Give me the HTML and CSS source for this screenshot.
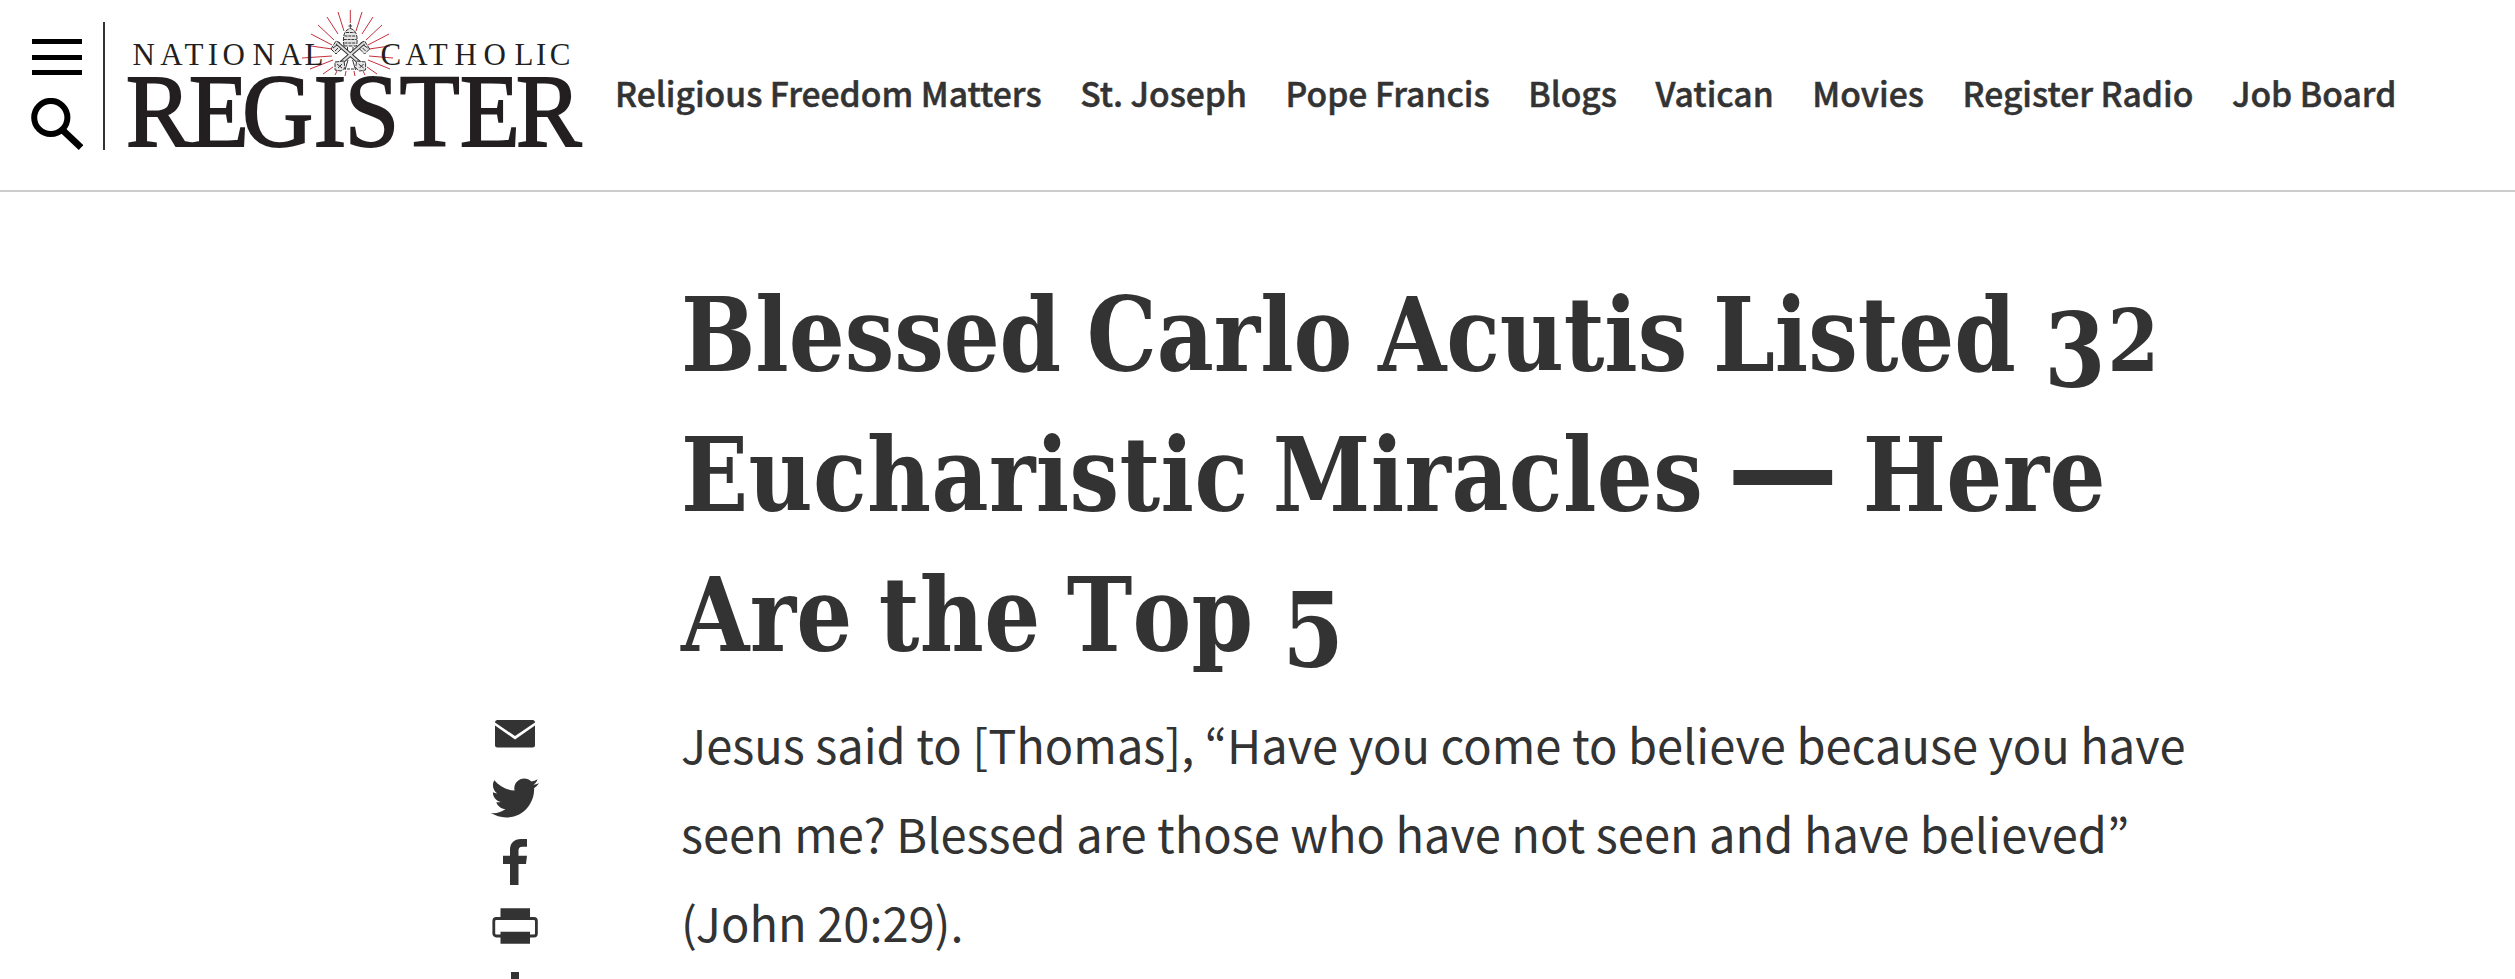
FILE: index.html
```
<!DOCTYPE html>
<html lang="en">
<head>
    <meta charset="UTF-8">
    <meta name="viewport" content="width=device-width, initial-scale=1.0">
    <title>Blessed Carlo Acutis Listed 32 Eucharistic Miracles | National Catholic Register</title>
    <link rel="stylesheet" href="styles.css">
</head>
<body>

    <header class="site-header">
        <div class="tools">
            <a href="#" class="menu-btn" aria-label="Menu"><span></span><span></span><span></span></a>
            <a href="#" class="search-btn" aria-label="Search">
                <svg width="52" height="52" viewBox="0 0 52 52">
                    <circle cx="19.8" cy="19.5" r="16.6" fill="none" stroke="#000" stroke-width="6"/>
                    <path d="M31.500 32 L50 49.500" stroke="#000" stroke-width="6.600"/>
                </svg>
            </a>
        </div>

        <a href="#" class="logo">
            <svg width="460" height="150" viewBox="125 0 460 150">
                <g class="rays">
                    <path d="M350.300 10v13M338 12l6 19M327 17l11 17M318 25l16 15M311 34l21 11M311 46l21 3M302 58l30-2M310 69l23-9M323 74l10-7M335 75l3-6M345 76l1-5"/>
                    <path d="M362 12l-6 19M373 17l-11 17M382 25l-16 15M389 34l-21 11M390 46l-21 3M393 58l-24-2M390 69l-22-9M377 74l-10-7M365 75l-3-6M355 76l-1-5"/>
                </g>
                <!-- tiara and crossed keys -->
                <g class="crest">
                    <path d="M350.300 24v5M348.500 26h3.600" />
                    <path class="crest-fill" d="M344 46c-1.500-8-.5-16 6.300-17.500C357 30 358 38 356.600 46z"/>
                    <path d="M346 32.500h8.600M344.500 36h11.600M343.800 39.500h13M344.500 43h11.600" stroke-dasharray="3 .8"/>
                    <path d="M347.500 47v6M353 47v6"/>
                    <path class="crest-fill" d="M331 49l5-8 4 2 1 6-5 5zM369.600 49l-5-8-4 2-1 6 5 5z"/>
                    <path d="M333 48l4-3M335 51l3-3M367.600 48l-4-3M365.600 51l-3-3"/>
                    <path class="key" d="M337 43l24 21M363.600 43l-24 21"/>
                    <path class="key-in" d="M337 43l24 21M363.600 43l-24 21"/>
                    <path class="crest-fill" d="M335 62l9-1 1 7-4 3-6-1zM365.600 62l-9-1-1 7 4 3 6-1z"/>
                    <path d="M337 64l5 4M342 64l-4 4M358.600 64l5 4M363.600 64l-4 4M348 60l-3 10M352.600 60l3 10M347 69h3M351 69h3" />
                </g>
                <text class="logo-small" y="65" x="132.6 160.3 184.5 207.8 222.4 252.6 279.6 304.6">NATIONAL</text>
                <text class="logo-small" y="65" x="380.4 405.2 428.8 454.4 483.6 514.6 536.1 549.8">CATHOLIC</text>
                <text class="logo-big" y="146" transform="scale(.95 1)" x="132.5 198.6 254.7 330 362.6 420.5 484 543">REGISTER</text>
            </svg>
        </a>

        <nav class="main-nav">
            <a href="#">Religious Freedom Matters</a>
            <a href="#">St. Joseph</a>
            <a href="#">Pope Francis</a>
            <a href="#">Blogs</a>
            <a href="#">Vatican</a>
            <a href="#">Movies</a>
            <a href="#">Register Radio</a>
            <a href="#">Job Board</a>
        </nav>
    </header>

    <main class="article">
        <h1 class="title">
            <span class="line line-1">Blessed Carlo Acutis Listed <span class="num-low">3</span><span class="num-x">2</span></span>
            <span class="line line-2">Eucharistic Miracles <span class="dash">—</span> Here</span>
            <span class="line line-3">Are the Top <span class="num-low">5</span></span>
        </h1>

        <div class="row">
            <div class="share">
                <a href="#" aria-label="Email">
                    <svg width="48" height="48" viewBox="0 0 48 48">
                        <path d="M4 12.500q0-2.500 2.500-2.500h35q2.500 0 2.500 2.500L24 26z"/>
                        <path d="M4 15.500v19.500q0 2.500 2.500 2.500h35q2.500 0 2.500-2.500V15.500L24 29.500z"/>
                    </svg>
                </a>
                <a href="#" aria-label="Twitter">
                    <svg width="48" height="48" viewBox="0 0 24 24">
                        <path d="M23.954 4.569c-.885.389-1.830.654-2.825.775 1.014-.611 1.794-1.574 2.163-2.723-.951.555-2.005.959-3.127 1.184-.896-.959-2.173-1.559-3.591-1.559-2.717 0-4.920 2.203-4.920 4.917 0 .390.045.765.127 1.124C7.691 8.094 4.066 6.130 1.640 3.161c-.427.722-.666 1.561-.666 2.475 0 1.710.870 3.213 2.188 4.096-.807-.026-1.566-.248-2.228-.616v.061c0 2.385 1.693 4.374 3.946 4.827-.413.111-.849.171-1.296.171-.314 0-.615-.030-.916-.086.631 1.953 2.445 3.377 4.604 3.417-1.680 1.319-3.809 2.105-6.102 2.105-.390 0-.779-.023-1.170-.067 2.189 1.394 4.768 2.209 7.557 2.209 9.054 0 13.999-7.496 13.999-13.986 0-.209 0-.420-.015-.630.961-.689 1.800-1.560 2.460-2.548z"/>
                    </svg>
                </a>
                <a href="#" aria-label="Facebook">
                    <svg width="48" height="48" viewBox="0 0 48 48">
                        <path d="M19 47V26h-7v-8.300h7V12c0-7 4-11 11-11h6v7.700h-4.500c-3 0-4 1.300-4 3.800v5.200H36L35 26h-7.500v21z"/>
                    </svg>
                </a>
                <a href="#" aria-label="Print">
                    <svg width="48" height="48" viewBox="0 0 48 48">
                        <path d="M9.500 6.300h29.500v11h-29.500zM9.500 29.700h29.500v12h-29.500z"/>
                        <rect x="2.800" y="16.500" width="42.600" height="17.500" rx="2.500" fill="none" stroke="#333" stroke-width="2.800"/>
                    </svg>
                </a>
                <a href="#" aria-label="More">
                    <svg width="48" height="48" viewBox="0 0 48 48">
                        <path d="M20 6h8v14h14v8H28v14h-8V28H6v-8h14z"/>
                    </svg>
                </a>
            </div>
            <p class="lead">
                Jesus said to [Thomas], “Have you come to believe because you have<br>
                seen me? Blessed are those who have not seen and have believed”<br>
                (John 20:29).
            </p>
        </div>
    </main>

</body>
</html>
```

FILE: styles.css
```
* {
    box-sizing: border-box;
}
body {
    margin: 0;
    height: 979px;
    overflow: hidden;
    background-color: #fff;
    color: #333;
    font-family: 'Source Sans Pro', 'Noto Sans CJK KR', sans-serif;
}
a {
    color: inherit;
    text-decoration: none;
}
svg {
    display: block;
}
.site-header {
    display: flex;
    height: 192px;
    border-bottom: 2px solid #ccc;
}
.tools {
    width: 105px;
    height: 128px;
    margin-top: 22px;
    padding: 17px 0 0 31px;
    border-right: 2px solid #333;
}
.menu-btn {
    display: flex;
    flex-direction: column;
    gap: 10.5px;
    width: 50px;
    margin-left: 1px;
}
.menu-btn span {
    height: 5px;
    background-color: #000;
}
.search-btn {
    display: block;
    margin-top: 23px;
}
.logo {
    margin-left: 20px;
}
.logo svg {
    overflow: visible;
}
.rays {
    fill: none;
    stroke: #c4303c;
    stroke-width: 1;
}
.crest {
    fill: none;
    stroke: #333;
    stroke-width: 1;
}
.crest-fill {
    fill: #e4e4e4;
    stroke-dasharray: 4 1;
}
.key {
    stroke: #333;
    stroke-width: 4;
}
.key-in {
    stroke: #ddd;
    stroke-width: 2;
}
.logo-small, .logo-big {
    font-family: 'Liberation Serif', serif;
    fill: #231f20;
}
.logo-small {
    font-size: 31px;
}
.logo-big {
    font-size: 104px;
    stroke: #231f20;
    stroke-width: 1.8;
}
.main-nav {
    display: flex;
    gap: 38.6px;
    padding-left: 30px;
    margin-top: 68px;
    font-size: 33.65px;
    font-weight: 500;
    line-height: 50px;
    white-space: nowrap;
    -webkit-text-stroke: .5px #333;
}
.title {
    margin: 73px 0 0 681px;
    font-family: 'DejaVu Serif Condensed', 'DejaVu Serif', serif;
    font-size: 102px;
    font-weight: bold;
    line-height: 140px;
    font-stretch: condensed;
}
.line {
    display: block;
    width: max-content;
    transform-origin: 0 0;
    transform: scaleX(.96);
}
.line-1 {
    letter-spacing: -.1px;
    word-spacing: -5px;
}
.line-2 {
    letter-spacing: .4px;
    word-spacing: -7px;
}
.line-3 {
    letter-spacing: .3px;
    word-spacing: -5px;
    font-kerning: none;
}
/* old-style figures */
.num-low {
    margin-left: 3px;
    vertical-align: -16px;
    line-height: 0;
}
.num-x {
    margin-left: 2px;
    font-size: 86px;
    line-height: 0;
}
.dash {
    font-size: 128px;
    line-height: 0;
}
.row {
    display: flex;
}
.share {
    display: flex;
    flex-direction: column;
    gap: 16px;
    width: 681px;
    padding: 25px 0 0 491px;
}
.share svg {
    fill: #333;
}
.lead {
    margin: 14px 0 0;
    font-size: 47px;
    line-height: 89px;
    white-space: nowrap;
}
```
